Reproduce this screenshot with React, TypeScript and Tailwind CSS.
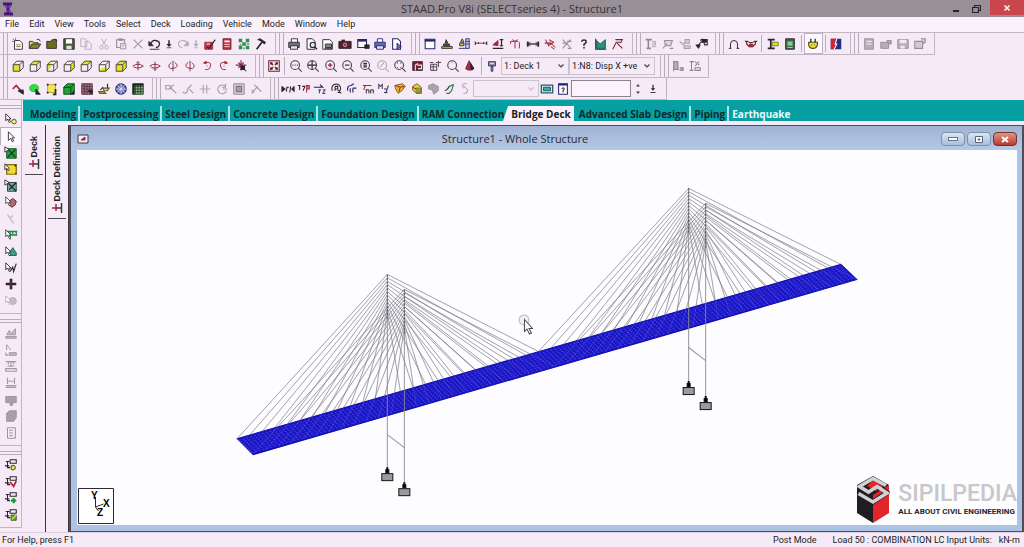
import { clsx } from 'clsx';

// [path, stroke, fill, stroke width]
type Shape = [string, string, string?, number?];

const K = '#2b2530';
const G = '#b3aab4';
const R = '#a5283a';
const Y = '#e9e02a';
const N = '#26266e';
const GR = '#1d9a35';
const X = 'none';

const cube = (face: string): Shape[] => [
  [face, X, Y],
  ['M2.5 6.5h7.500v7.500h-7.500zM2.5 6.500l4-4h7.500l-4 4M14 2.500v7.500l-4 4', '#4a4538', X, 1.1],
];
const FRONT = 'M2.5 6.500h7.500v7.500h-7.500z';
const TOP = 'M2.5 6.500l4-4h7.500l-4 4z';
const SIDE = 'M10 6.500l4-4v7.500l-4 4z';

const lens = (inner: string, color = K): Shape[] => [
  ['M2 7a5 5 0 1 0 10 0a5 5 0 1 0 -10 0M10.500 10.500l4 4', '#453d4a', X, 1.2],
  [inner, color, X, 1.3],
];
const cursor = (tone = K): Shape => ['M2 2v8l2-2l2 4l1.500-1l-2-3h2.500z', tone, '#fff', 1];
const sheet: Shape = ['M3.500 2h6l3 3v9h-9z', K, '#fff', 1.1];

const icons: Record<string, Shape[]> = {
  'New': [['M4 4h6l3 3v7h-9z', K, '#fff'], ['M6 9h5M6 11h5M2 2l3 3M5 1v3M1 5h3', '#77713b']],
  'Open': [['M1.500 13v-8h4l1 1.500h5v2', K, '#d9d26a'], ['M1.500 13l3-5h10l-3 5z', K, '#8c8426'], ['M10 3q3-2 4 2', K]],
  'Close': [['M2 13v-8h5l1-2h5v10z', K, '#716b1e'], ['M11 2l3 2', K]],
  'Save': [['M2 2h12v12h-12z', K, '#4b5b38'], ['M4.500 2.500h7v5h-7z', X, '#fff'], ['M5 10h6v4h-6z', X, '#dce0e8']],
  'Copy': [['M2 2h5l2 2v7h-7zM7 5h4l3 3v6h-7z', G]],
  'Cut': [['M5 2l5 8M11 2l-5 8M3 12a2 2 0 1 0 4 0a2 2 0 1 0 -4 0M9 12a2 2 0 1 0 4 0a2 2 0 1 0 -4 0', G]],
  'Paste': [['M3 3h9v4M3 3v9h4M6 2h3v2h-3z', '#999099', X, 1.4], ['M7.500 7.500h6v6h-6zM9 10h3', '#999099', '#ece4ee']],
  'Delete': [['M3 3l10 10M13 3l-10 10', '#a39aa4', X, 1.4]],
  'Undo': [['M3 8q2-5 6-4q5 1 4 5q-1 3-4 3', K, X, 1.5], ['M1 5v5h5z', K, K], ['M2 14h11', K]],
  'Undo list': [['M5 3v5', K, X, 2], ['M1.500 8h7l-3.500 4z', X, K], ['M2 13h6', K]],
  'Redo': [['M13 8q-2-5-6-4q-5 1-4 5q1 3 4 3', G, X, 1.3], ['M14 5v5h-5z', G, G]],
  'Redo list': [['M5 3v5', G, X, 2], ['M1.500 8h7l-3.500 4z', X, G], ['M2 13h6', G]],
  'Input Editor': [['M2 6h9v8h-9z', R, '#b8394a'], ['M4 11l3 2l7-10', K, X, 1.3], ['M4 8h4', '#fff']],
  'Calculator': [['M3.500 2h9v12h-9z', '#701525', '#c4384a'], ['M5 4h6v2h-6z', X, '#fff'], ['M5 8.500h6M5 11h6', '#f8d0d4', X, 1]],
  'Configure': [['M2 2h4v4h-4zM10 2h4v4h-4zM6 6h4v4h-4zM2 10h4v4h-4zM10 10h4v4h-4z', X, '#2a8f51'], ['M3 9h2M11 8h3M8 12v2', '#174d2b']],
  'Tools': [['M4 3l3-1l6 4l-1 2l-4-3', K, K], ['M9 6l-6 8', K, X, 2]],
  'Print': [['M5 6v-4h7v4', K, '#fff'], ['M2 6h12v6h-12z', K, '#777080'], ['M4 10h8v4h-8z', K, '#e8e4ee']],
  'Print Preview': [sheet, ['M7 9a3 3 0 1 0 6 0a3 3 0 1 0 -6 0M12 11l3 3', K, '#dfe8f0', 1.3]],
  'Report': [['M2 3h8l3 3v8h-11z', K, '#fff'], ['M5 8h7v4h-7zM4 13h9', K, '#888']],
  'Take Picture': [['M1 5h14v8h-14z', K, '#542029'], ['M6 9a2 2 0 1 0 4 0a2 2 0 1 0 -4 0', '#c9a8ae', R], ['M4 4h4', K, X, 2]],
  'Export View': [['M2 3h10v9h-10z', N, '#fff', 1.2], ['M2 4h10', N, X, 2.500], ['M10 9h5v4h-5z', K, K]],
  'Print Current View': [['M5 6v-4h6v4', N, '#fff'], ['M2 6h12v6h-12z', N, '#5f6bb2'], ['M4 10h8v4h-8z', N, '#d8dcf5']],
  'Page Setup': [['M3 2h6l3 3v9h-9z', N, '#fff', 1.2], ['M8 7l5 4l-5 3z', N, '#6c78bd']],
  'Structure Window': [['M2.500 2.500h11v11h-11z', N, '#fff', 1.2], ['M2 4h12', N, X, 2.500]],
  'Scale': [['M2 13h12v-2h-12z', K, '#d8c532'], ['M4 10h7v-2h-7zM6 7l1-4l2 4z', K, '#5a6432']],
  'Scale Results': [['M2 13h8M3 10h5v-3h-5zM4 6l2-4l2 4z', N, '#d8c532'], ['M10 2h4v11h-4z', N, '#d8d4e8'], ['M10 5h4M10 8h4', N]],
  'Dimension': [['M1 7h14', R, X, 1], ['M1.500 5v4M14.500 5v4M5 6v2M11 6v2', K, X, 1.2]],
  'Load Values': [['M2 13h12M10 3h4M12 3v7M10 10h4', K, X, 1.4], ['M2 9l6-5v6z', R, R]],
  'Support Reaction': [['M3 5h9M3 5v3M8 5v8M13 6v7M5 3l3 2l3-2', R, X, 1.1]],
  'Node Dimension': [['M1 8h14', K, X, 1.5], ['M2 5v6M14 5v6', K, X, 2], ['M5 6l-3 2l3 2M11 6l3 2l-3 2', K]],
  'Labels': [['M3 3l4 8M7 3l5 3l-6 4M10 8l4 4M2 7h7', R, '#efc6ae', 1.2], ['M9 11l4 3', K]],
  'Annotate': [['M3 3l9 9M12 3l-9 10M8 5h5M3 7h4M9 13h4', '#968c98', X, 1.2]],
  'Help': [['M5.500 5.500q0-2 2.500-2q2.500 0 2.500 2q0 1.500-2.500 3v1.500M8 11.500v1.500', K, X, 1.8]],
  'Results Graph': [['M2 2v12h12', K, X, 1.3], ['M3 4l4 4l6-5v10h-10z', '#155a50', '#2c8f7d']],
  'Animate': [['M2 14l4-8h6M7 7l6 6M5 3h8l-2 4', '#752838', X, 1.2]],
  'Steel Section': [['M2 3h7M5 3v10M3 13h5', '#918893', X, 1.8], ['M9 5h4v4h-4M9 11h5', '#aaa1ac', '#ddd3df']],
  'Assign Beam': [['M4 4h9l-2 6h-6zM2 13l5-5M10 13h4', '#968d98', '#ddd3df', 1.2]],
  'Assign Member': [['M8 3h5v4h-5zM2 5l4 4l3-3M7 10h7v3h-7z', '#aaa1ac', '#ddd3df', 1.2]],
  'Properties': [['M6 4q2-2 4-1h4v6h-3l-1-4q-4 0-6 5', '#39323e', X, 1.3], ['M1 9l5 0l-2 4zM8 3h5v3h-5z', K, K]],
  'Moving Load': [['M4 13v-5a4 4 0 0 1 8 0v5M2 13h3M11 13h3', K, X, 1.1]],
  'Influence Surface': [['M1 5h3q4 3 8 0h3M3 5v3l3 3h4l3-3v-3', '#5a2730', X, 1.3], ['M6 8h4v3h-4z', R, R]],
  'Section Wizard': [['M2 3h8M2 13h8M5.500 3v10', K, X, 2], ['M7 6h7v4h-7z', '#77721e', Y]],
  'Advanced': [['M3 2h10v12h-10z', K, '#46604d'], ['M5 5h6v5h-6z', X, '#6bd48a'], ['M5 12h6', '#9de']],
  'Connect': [['M3 6h10v3q-1 4-5 4q-4 0-5-4z', '#4a481a', Y, 1.2], ['M5.500 2v4M10.500 2v4', K, X, 1.5], ['M6 9h1M9.500 9h1', K]],
  'Bentley': [['M2 2h12v12h-12z', X, '#252c86'], ['M2 2h7l-2 5l2 1l-4 6h-3z', X, '#cf2635'], ['M9 2l-2 6h2l-3 6', '#fff', X, 1.2]],
  'Save Layout': [['M3 2h10v12h-10z', '#968d98', '#b7adb9'], ['M5 5h6M5 8h6', '#eee', X, 1.4]],
  'Load Layout': [['M2 6h9v7h-9zM9 4h5v4h-3z', '#968d98', '#b7adb9']],
  'Save View': [['M2 3h12v10h-12z', '#968d98', '#b7adb9'], ['M4 3h8v4h-8zM5 10h5v3h-5z', X, '#f2e8f4']],
  'Open View': [['M2 5h9v8h-9zM9 2h5v4l-3 2', '#968d98', '#d4cad6', 1.2]],

  'Front': cube(FRONT),
  'Back': cube(TOP),
  'Right': cube('M6.500 2.500l-4 4v7.500l4-4z'),
  'Left': cube(SIDE),
  'Top': cube(TOP),
  'Bottom': cube('M2.500 14l4-4h7.500l-4 4z'),
  'Isometric': cube(FRONT + TOP + SIDE),
  'Rotate Up': [['M2 8q6-4 12 0q-5 4-11 1M8 3v10', '#8f3042', X, 1.1], ['M6 5l2-2l2 2', R]],
  'Rotate Down': [['M2 8q6-4 12 0q-5 4-11 1M8 3v10', '#8f3042', X, 1.1], ['M6 11l2 2l2-2', R]],
  'Rotate Left': [['M8 2v12M6 4q-5 4-1 7l6-1M10 4q5 3 1 6', '#8f3042', X, 1.1]],
  'Rotate Right': [['M8 2v12M6 4q-5 3-1 6M10 4q5 4 1 7l-6-1', '#8f3042', X, 1.1]],
  'Spin Left': [['M7 4q6-1 5 4q-1 5-6 4M7.500 8h1', '#8f3042', X, 1.1], ['M7 2.500v3l-3-1z', R, R]],
  'Spin Right': [['M9 4q-6-1-5 4q1 5 6 4M7.500 8h1', '#8f3042', X, 1.1], ['M9 2.500v3l3-1z', R, R]],
  'Toggle 3D': [['M2 7h12M8 1v12M5 4l6 6M11 4l-6 6', '#8f3042', X, 1.3], ['M8 8h4v4h-4zM11 11l3 3', K, K, 1.2]],
  'Whole Structure': [['M2 2h12v12h-12z', '#6e2230', '#f8e4ea', 1.2], ['M4 4l3 3M12 4l-3 3M4 12l3-3M12 12l-3-3', '#4a2028', X, 1.2], ['M4 4h2v2h-2zM10 4h2v2h-2zM4 10h2v2h-2zM10 10h2v2h-2z', '#4a2028', '#4a2028', 0.6]],
  'Zoom Window': lens('M4 7h1M6.500 7h1M9 7h1'),
  'Zoom Factor': lens('M7 2v10M2 7h10'),
  'Zoom In': lens('M7 4.500v5M4.500 7h5', '#9c1830'),
  'Zoom Out': lens('M4.500 7h5'),
  'Zoom All': lens('M5 5h4M5 7h4M5 9h4'),
  'Zoom Previous': [['M2 7a5 5 0 1 0 10 0a5 5 0 1 0 -10 0M10.500 10.500l4 4M5 9l4-5', '#b1a8b3', X, 1.3]],
  'Zoom Extents': lens('M5 5v-1M9 5v-1M5 10v-1M9 10v-1'),
  'Display Window': [['M2 3h11v10h-11z', K, '#7b2030'], ['M5 13v-6l3-2M7 7h5v4h-4', '#efe2e8', X, 1.2]],
  'Pan': [['M3 6h7v7h-7zM6 6v7M3 9h7M12 2v7M9 4h6M2 4h4', '#57404a', X, 1.1]],
  'Magnify': lens('M5 5q2-2 4 0', '#d5cdd8'),
  'Rotate': [['M7 2l5 8q-4 5-9 1z', '#6d2030', '#a23247'], ['M8 4l5 7q-2 2-4 2z', X, '#2e2030']],
  'View Options': [['M4 3h8v5h-8zM7 8h2v6h-2z', '#3a3558', '#8d8ab0'], ['M6 5h4', '#fff']],
  'Assign Load': [['M3 2v12M3 3h5v9h-5M6 12h3M10 10h4v3h-4', '#8d838f', '#b5abb7', 1.1]],
  'View Load': [['M2 3h5M4 3v10M2 13h4M8 3l5 4M13 3l-5 5M8 10h6v3h-6z', '#8d838f', X, 1.2]],

  'Beam Page': [['M2 8l4-4l8 9', '#a7292f', X, 2], ['M8 10l6 4v-5z', K, K]],
  'Node Page': [['M2 7a5 4 0 1 0 10 0a5 4 0 1 0 -10 0', '#20b830', '#2fdc3d'], ['M9 8l5 6h-5z', K, K]],
  'Plate Page': [['M3 3h9v9h-9z', '#b5a41f', '#f7e35a'], ['M2 3h2M11 3h2M2 12h2M12 8v6h-3', K, X, 2]],
  'Solid Page': [['M2 6l4-4h8v8l-4 4h-8z', '#123f1b', '#1ba52f'], ['M2 6h8v8M10 6l4-4', '#0c3513'], ['M10 14l4-4v4z', K, K]],
  'Surface Page': [['M2 2h12v12h-12z', '#4c2a33', '#a77480'], ['M2 5h12M2 8h12M2 11h12M5 2v12M8 2v12M11 2v12', '#4c2a33', X, 0.8], ['M9 10l5 4v-5z', K, K]],
  'Physical Member': [['M2 11h6l2 2h-7zM7 7h7l-2 3h-4z', '#6b5c22', '#f0d64a', 1.2], ['M12 2v5M4 9l3-3', N, X, 1.3]],
  'Geometry': [['M2 8a6 6 0 1 0 12 0a6 6 0 1 0 -12 0', N, '#6a70ba', 1.2], ['M2 8h12M8 2v12M4 4l8 8M12 4l-8 8', '#e4e6ff', X, 0.9]],
  'Tables': [['M2 2h12v12h-12z', '#1e3f22', '#8fae8c'], ['M2 5h12M2 8h12M2 11h12M5 2v12M8 2v12M11 2v12', '#142616', X, 0.8], ['M2 3h12M3 2v12', '#142616', X, 2]],
  'Snap Node': [['M2 4h5v4h-5zM7 6l7 7M11 3l-5 5', '#a59ca7', X, 1.3]],
  'Add Beam': [['M2 11a2.500 2.500 0 1 0 5-2l5-6M8 6l6 7', '#a59ca7', X, 1.3]],
  'Insert Node': [['M2 8h12M6 3v10M10 3v10', '#b0a7b2', X, 1.3]],
  'Circular Repeat': [['M12 5a5 5 0 1 0 1 5M9 8h5M12 2v4h-4', '#a59ca7', X, 1.2]],
  'Mirror': [['M2 2h12v12h-12z', '#99909b', '#d3c9d5', 1.1], ['M5 5h6v6h-6z', '#7f7681', '#a79da9', 1.2]],
  'Renumber': [['M3 13l7-8M6 3l8 8M3 9l3 3', '#a59ca7', X, 1.4]],
  'Local Axis': [['M1 5l4 3l-4 3zM15 5l-3 3l3 3z', K, K, 1], ['M6 6h3M7 6l-1 5M11 5l-1 7', K, X, 1.2]],
  'Force Flag': [['M1 4h3M3 4v5M6 5h3l-2 5', K, X, 1.2], ['M11 4h3v4h-3M11 3v9', R, '#d5828f', 1.2]],
  'Axial': [['M1 6h10l-3-3', K, X, 1.3], ['M6 9h3M8 9l-1 4M11 9h3l-3 4h3', N, X, 1.1]],
  'Torsion': [['M4 10a5 5 0 1 1 6 2M7 5v5M7 5h3v3h-3M10 9l4 4', K, X, 1.2]],
  'Moment Y': [['M3 10q-1-6 4-6M7 4l3-2M6 7v5M9 7v5M9 7h4', N, X, 1.3]],
  'Moment Z': [['M2 4h10M5 4l-2 5', R, X, 1.2], ['M6 8v5M6 9h3v4M11 9v4M11 9h3v4', K, X, 1.1]],
  'Member Stress': [['M2 8v-5l2 2l2-2v5M8 8h4M8 12h4M13 4l-3 9', '#3d3a58', X, 1.2]],
  'Section Stress': [['M2 4l9-2l3 3l-4 5l-4 3l-3-5z', '#6c5b1b', '#e2ba31'], ['M3 4l5 2l5-1M8 6l-1 5', '#b3283b', X, 1.3]],
  'Plate Stress': [['M3 5l5-3l5 4v7h-6l-4-4z', '#51672d', '#f0c83a'], ['M7 7h5v5h-5z', '#9c7123', '#6fb74c'], ['M3 6l4 2', '#b3283b', X, 1.4]],
  'Solid Stress': [['M3 4l5-2l6 3v5l-5 4l-2-5l-4-1z', '#99909b', '#aaa1ac']],
  'Mode Shape': [['M3 10q4-1 5-5l5-2l-2 7l-3 3h-3', '#2f7d49', X, 1.3], ['M5 9l4-4', N]],
  'Dynamics': [['M10 2q-5-1-5 3q6 2 6 5q-1 4-5 3M5 7l3-2', G, X, 1.2]],
  'Play': [['M1.500 3.500h13v9h-13z', '#285b68', '#d6eef0', 1.5], ['M4 6h8v4h-8z', '#174e5a', '#39aaa4']],
  'Query': [['M3 2h10v12h-10z', N, '#fff', 1.2], ['M3 3h10', N, X, 2], ['M6.500 8q2-3 3 0l-1.500 2v2', K, X, 1.2]],
  'Step': [['M8 3v5', K, X, 1.4], ['M5.500 7h5l-2.500 3z', X, K], ['M5 12h6', K]],

  'Nodes Cursor': [cursor(), ['M9 11a2.500 2.500 0 1 0 5 0a2.500 2.500 0 1 0 -5 0', '#7d7620', '#fff6a0', 1.4]],
  'Beams Cursor': [['M5 2v10l2.500-2.500l2 4l1.500-1l-2-3.500h3z', K, '#fff', 1]],
  'Plates Cursor': [['M3 3h11v11h-11z', '#0e5a23', '#23a03c'], ['M4 3l9 10M13 4l-9 9', '#0c3b18', X, 1.4], ['M1 1v6l5-3z', K, '#fff']],
  'Surface Cursor': [['M3 3h11v11h-11z', '#7a6d1b', '#f2da27', 1.4], ['M1 2v7l2-2l2 3l1-1l-1-3z', K, '#fff'], ['M13 3v2M13 13h1', K, X, 2]],
  'Solids Cursor': [['M4 4h10v10h-10z', '#1a3b40', '#6bb095'], ['M4 4l10 10M14 4l-8 8', K, X, 1.6], ['M1 1v6l5-3z', K, '#fff']],
  'Geometry Cursor': [['M6 7l4-3l4 3l-1 4l-4 3l-4-3z', '#541e28', '#b26b76'], cursor('#4b414d')],
  'Text Cursor': [['M4 3l7 10M10 4l-3 3', '#c3b9c5', X, 1.4]],
  'Load Edit': [['M3 4h12M4 8h11M7 4v9M10 4v4M14 4v4', '#23864b', X, 1.5], cursor('#2b4a35')],
  'Support Edit': [['M10 3l4 6v3h-8v-3z', '#1c5a48', '#3f9d82'], cursor('#2b3a35')],
  'Release Edit': [['M7 12l3-5l1 5l3-9', K, X, 1.3], cursor()],
  'Joint Cursor': [['M8 2v12M2 8h12', K, X, 3], ['M8 4v8', R, X, 1]],
  'Filtered': [['M6 8a4 4 0 1 0 8 0a4 4 0 1 0 -8 0', G, '#c5bbc7'], cursor(G)],
  'Plate Load': [['M2 12h12v2h-12zM3 10l3-5l2 4l5-6v7z', '#a098a2', '#c2b9c4', 1.1]],
  'Floor Load': [['M6 11h8v3h-8zM3 2l5 6M3 2v6M2 11v3h3', '#a098a2', '#c2b9c4', 1.1]],
  'Joist Load': [['M2 3h12M5 3v3M8 3v6M11 3v3M4 8h8M2 11h12v3h-12z', '#a098a2', X, 1.3]],
  'Wind Load': [['M4 2v7M12 2v7M5 6h6M2 11h12M2 13h12', '#a098a2', X, 1.3]],
  'Mass': [['M2 4h12v7h-4v3h-3v-3h-5z', '#99909b', '#a89faa']],
  'Volume': [['M3 5l3-3h8v8l-3 4h-8z', '#99909b', '#a89faa']],
  'List': [['M4 2h9v12h-9zM6 5h4M6 8h4M6 11h4', '#99909b', X, 1.1]],
  'Group Query': [['M2 4h4M4 4v7h3M1 9h5M7 2h7v4h-7z', K, X, 1.2], ['M8 11a2.500 2.500 0 1 0 5 0a2.500 2.500 0 1 0 -5 0', '#6b661f', '#eee358', 1.3]],
  'Group Remove': [['M2 4h4M4 4v7h3M1 9h5M7 2h7v4h-7z', K, X, 1.2], ['M7 8l4 5l3-6', '#c01d38', X, 2]],
  'Group Add': [['M2 4h4M4 4v7h3M1 9h5M7 2h7v4h-7z', K, X, 1.2], ['M11 8v6M8 11h6', GR, X, 2.500]],
  'Group Edit': [['M2 4h4M4 4v7h3M1 9h5M7 2h7v4h-7z', K, X, 1.2], ['M8 8h6v6h-6z', '#3e5a23', '#4eb04a'], ['M9 13l5-5', Y, X, 1.4]],
};

function Drawing({ name, className = 'w-4 h-4' }: { name: string; className?: string }) {
  return (
    <svg viewBox="0 0 16 16" className={clsx('shrink-0', className)} aria-hidden="true">
      {icons[name].map(([d, stroke, fill = 'none', width = 1], i) => (
        <path key={i} d={d} stroke={stroke} fill={fill} strokeWidth={width} />
      ))}
    </svg>
  );
}

function Tools({ names }: { names: string[] }) {
  return (
    <>
      {names.map((name, i) => {
        if (name === '|') {
          return <span key={i} className="w-px mx-0.5 my-0.5 bg-[#b9aebb] shrink-0" />;
        }
        const narrow = name.endsWith(' list');
        return (
          <button
            key={i}
            type="button"
            aria-label={name}
            className={clsx(
              'flex items-center justify-center overflow-hidden',
              narrow ? 'w-2.5 shrink-0' : 'flex-1 min-w-0',
              name === 'Connect' && 'bg-[#fdf8fe] border border-[#c0b4c2]'
            )}
          >
            {narrow ? (
              <svg viewBox="0 0 10 16" className="w-2 h-3" aria-hidden="true">
                {icons[name].map(([d, stroke, fill = 'none', width = 1], j) => (
                  <path key={j} d={d} stroke={stroke} fill={fill} strokeWidth={width} />
                ))}
              </svg>
            ) : (
              <Drawing name={name} className="w-3.5 h-3.5" />
            )}
          </button>
        );
      })}
    </>
  );
}

function Group({ width, names, children }: { width: string; names: string[]; children?: React.ReactNode }) {
  return (
    <div className={clsx('flex shrink-0 pl-[3px] pr-[5px] border-r border-b border-[#c2b6c4]', width)}>
      <span className="w-[5px] mr-px border-x border-[#b9adbb] shrink-0" />
      <Tools names={names} />
      {children}
    </div>
  );
}

function Combo({ label, options, className }: { label: string; options: string[]; className?: string }) {
  return (
    <div className={clsx('relative flex my-0.5 shrink-0 border border-[#cbc0cd]', className)}>
      <select
        aria-label={label}
        className="appearance-none flex-1 min-w-0 py-0 pl-0.5 bg-transparent text-[9px] leading-4 font-['Roboto',sans-serif] outline-none"
      >
        {options.map((o) => (
          <option key={o}>{o}</option>
        ))}
      </select>
      <svg viewBox="0 0 6 4" className="absolute right-1 top-1.5 w-1.5 h-1 pointer-events-none" aria-hidden="true">
        <path d="M0.500 0.500L3 3L5.500 0.500" fill="none" stroke={options.length ? '#444' : '#c8bdca'} strokeWidth="1.200" />
      </svg>
    </div>
  );
}

const menus = ['File', 'Edit', 'View', 'Tools', 'Select', 'Deck', 'Loading', 'Vehicle', 'Mode', 'Window', 'Help'];

const tabs = [
  'Modeling', 'Postprocessing', 'Steel Design', 'Concrete Design', 'Foundation Design', 'RAM Connection',
  'Bridge Deck', 'Advanced Slab Design', 'Piping', 'Earthquake',
];

function Toolbars() {
  return (
    <div className="bg-[#f5eaf6] border-t border-[#c2b6c4]">
      <div className="flex h-[22px]">
        <Group
          width="w-[276px]"
          names={['New', 'Open', 'Close', 'Save', 'Copy', 'Cut', 'Paste', 'Delete', 'Undo', 'Undo list', 'Redo', 'Redo list', 'Input Editor', 'Calculator', 'Configure', 'Tools']}
        />
        <Group
          width="w-[136px]"
          names={['Print', 'Print Preview', 'Report', 'Take Picture', 'Export View', 'Print Current View', 'Page Setup']}
        />
        <Group
          width="w-[221px]"
          names={['Structure Window', 'Scale', 'Scale Results', 'Dimension', 'Load Values', 'Support Reaction', 'Node Dimension', 'Labels', 'Annotate', 'Help', 'Results Graph', 'Animate']}
        />
        <Group width="w-[83px]" names={['Steel Section', 'Assign Beam', 'Assign Member', 'Properties']} />
        <Group
          width="w-[135px]"
          names={['Moving Load', 'Influence Surface', '|', 'Section Wizard', 'Advanced', '|', 'Connect', '|', 'Bentley']}
        />
        <Group width="w-[84px]" names={['Save Layout', 'Load Layout', 'Save View', 'Open View']} />
      </div>
      <div className="flex h-[23px]">
        <Group
          width="w-[256px]"
          names={['Front', 'Back', 'Right', 'Left', 'Top', 'Bottom', 'Isometric', 'Rotate Up', 'Rotate Down', 'Rotate Left', 'Rotate Right', 'Spin Left', 'Spin Right', 'Toggle 3D']}
        />
        <Group
          width="w-[405px]"
          names={['Whole Structure', '|', 'Zoom Window', 'Zoom Factor', 'Zoom In', 'Zoom Out', 'Zoom All', 'Zoom Previous', 'Zoom Extents', 'Display Window', 'Pan', 'Magnify', 'Rotate', '|', 'View Options']}
        >
          <Combo label="Deck" options={['1: Deck 1']} className="w-[68px]" />
          <Combo label="Influence diagram" options={['1:N8: Disp X +ve']} className="w-[86px]" />
        </Group>
        <Group width="w-[48px]" names={['Assign Load', 'View Load']} />
      </div>
      <div className="flex h-[22px]">
        <Group
          width="w-[153px]"
          names={['Beam Page', 'Node Page', 'Plate Page', 'Solid Page', 'Surface Page', 'Physical Member', 'Geometry', 'Tables']}
        />
        <Group width="w-[118px]" names={['Snap Node', 'Add Beam', 'Insert Node', 'Circular Repeat', 'Mirror', 'Renumber']} />
        <Group
          width="w-[396px]"
          names={['Local Axis', 'Force Flag', 'Axial', 'Torsion', 'Moment Y', 'Moment Z', 'Member Stress', 'Section Stress', 'Plate Stress', 'Solid Stress', 'Mode Shape', 'Dynamics']}
        >
          <Combo label="Load case" options={[]} className="w-[66px]" />
          <Tools names={['Play', 'Query']} />
          <input aria-label="Step value" className="w-[60px] my-0.5 shrink-0 border border-[#8d838f] bg-[#fbf2fc] px-1 text-[9px]" />
          <button type="button" aria-label="Spin value" className="w-3.5 shrink-0 flex items-center justify-center">
            <svg viewBox="0 0 6 12" className="w-1.5 h-3" aria-hidden="true">
              <path d="M1 3.500h4l-2-2.500zM1 8.500h4l-2 2.500z" fill="#4b434d" />
            </svg>
          </button>
          <Tools names={['Step']} />
        </Group>
      </div>
    </div>
  );
}

function SideGroup({ height, names, pressed }: { height: string; names: string[]; pressed?: string }) {
  return (
    <div className="border-r border-b border-[#c2b6c4] pt-[5px] pb-1">
      <div className="h-1 mb-0.5 border-y border-[#b9adbb]" />
      <div className={clsx('flex flex-col', height)}>
        {names.map((name) => (
          <button
            key={name}
            type="button"
            aria-label={name}
            className={clsx('flex-1 min-h-0 flex items-center justify-center', name === pressed && 'bg-[#fdf8fe] border-l border-t border-[#b9adbb]')}
          >
            <Drawing name={name} className="w-3.5 h-3.5" />
          </button>
        ))}
      </div>
    </div>
  );
}

function PageTab({ label }: { label: string }) {
  return (
    <div className="w-[23px] shrink-0 flex flex-col border-r border-[#3a343c] pt-[11px]">
      <button type="button" className="flex flex-col items-center mx-0.5 pb-1 border-b border-[#4a434c]">
        <span className="[writing-mode:vertical-rl] rotate-180 text-[9px] leading-3 font-bold font-['Liberation_Sans',sans-serif]">
          {label}
        </span>
        <svg viewBox="0 0 12 12" className="w-3 h-3" aria-hidden="true">
          <path d="M10.500 1v10M5 6h5" stroke="#3a343c" strokeWidth="1.500" />
          <path d="M1 6h5M5 2v7" stroke="#a5283a" strokeWidth="1.500" />
        </svg>
      </button>
    </div>
  );
}

interface TowerProps {
  x: number;
  y: number;
  left: [number, number];
  right: [number, number];
}

const CABLES = 12;

function Cables({ x, y, left, right }: TowerProps) {
  const midX = (left[0] + right[0]) / 2;
  const midY = (left[1] + right[1]) / 2;
  const lines = [left, right].flatMap((end) =>
    Array.from({ length: CABLES }, (_, i) => {
      const t = 1 - i / CABLES;
      return `M${x} ${y + i * 3.4}L${midX + (end[0] - midX) * t} ${midY + (end[1] - midY) * t}`;
    })
  );
  return <path d={lines.join('')} fill="none" />;
}

const towers: TowerProps[] = [
  { x: 387, y: 274, left: [237, 438], right: [538, 351] },
  { x: 404, y: 289, left: [253, 453], right: [554, 366] },
  { x: 688, y: 188, left: [538, 351], right: [840, 264] },
  { x: 705, y: 203, left: [554, 366], right: [856, 279] },
];

function Bridge() {
  const strips = Array.from({ length: 8 }, (_, i) => {
    const t = (i + 1) / 9;
    return `M${237 + 16 * t} ${438 + 16 * t}L${840 + 16 * t} ${264 + 15 * t}`;
  });
  return (
    <svg viewBox="77 150 939 374" className="w-full h-full" role="img" aria-label="Whole structure">
      <g stroke="#565557" strokeWidth="0.55">
        {towers.map((t) => (
          <Cables key={t.x} {...t} />
        ))}
      </g>
      <path d="M237 438L840 264L856 279L253 454Z" fill="#1a16c8" stroke="#120cae" />
      <path d={strips.join('')} stroke="#9a98ee" strokeWidth="0.6" strokeDasharray="1.500 2.500" opacity="0.7" />
      <g stroke="#c8c6f5" strokeWidth="0.5" opacity="0.3">
        {towers.map((t) => (
          <Cables key={t.x} {...t} />
        ))}
      </g>
      <g>
        {towers.map((t) => (
          <g key={t.x}>
            <path d={`M${t.x} ${t.y}v197`} stroke="#8b898d" strokeWidth="0.9" />
            <path d={`M${t.x} ${t.y}v45`} stroke="#58565a" strokeDasharray="2 1.500" />
            <path d={`M${t.x - 1.5} ${t.y + 198}v-3h1v-2h1v2h1v3z`} stroke="#111" />
            <rect x={t.x - 5.5} y={t.y + 199} width="11" height="7" fill="#9c9a9e" stroke="#151515" />
          </g>
        ))}
      </g>
      <path d="M387 434L404 447M688 347L705 360" stroke="#98949c" />
      <circle cx="523.500" cy="319.500" r="5" fill="#f1eff2" stroke="#bab6bc" />
      <path d="M524 319v12l2.500-2.500l2.500 5l2-1l-2.500-4.500h3.500z" fill="#fff" stroke="#4c4850" />
    </svg>
  );
}

function Watermark() {
  return (
    <div className="absolute right-0 bottom-0 flex items-center gap-2">
      <svg viewBox="0 0 34 50" className="w-[34px] h-[50px] shrink-0" aria-hidden="true">
        <path d="M17 1L33 10L17 30L1 10Z" fill="#211c20" />
        <path d="M1 10L17 20V48L1 38Z" fill="#211c20" />
        <path d="M33 10L17 20V48L33 38Z" fill="#e0252b" />
        <path d="M17 5L27 11L20 16L11 11Z" fill="#e0252b" />
        <path d="M30 10.500L17 3.500L3.500 11.500L12.500 17L21 11.500L26 14.500" fill="none" stroke="#d2d0d2" strokeWidth="3.600" />
        <path d="M26 14.500L31 17.500L17 27L3.500 18.500" fill="none" stroke="#211c20" strokeWidth="5" />
        <path d="M24 13.500L31 18L17 27L2.500 18.500" fill="none" stroke="#d2d0d2" strokeWidth="3.600" />
      </svg>
      <div className="font-['Roboto',sans-serif] whitespace-nowrap">
        <p className="text-[23px] leading-6 font-medium text-[#c8c7c9]">SIPILPEDIA</p>
        <p className="text-[8px] leading-3 font-bold text-[#2a262b]">ALL ABOUT CIVIL ENGINEERING</p>
      </div>
    </div>
  );
}

function ChildWindow() {
  return (
    <div className="flex-1 min-w-0 flex flex-col bg-[#adc3e3] border-l-2 border-t border-r-2 border-b border-[#4f4b57] pl-1.5 pr-[5px] pb-1.5">
      <div className="h-6 pt-0.5 -ml-1.5 -mr-[5px] pl-1.5 pr-[5px] shrink-0 flex items-center bg-gradient-to-b from-[#9fb3d3] to-[#b5c8e6]">
        <svg viewBox="0 0 12 10" className="w-3 h-2.5 shrink-0" aria-hidden="true">
          <path d="M1 1h10v8h-10z" fill="#f3eef4" stroke="#3d3842" />
          <path d="M4 6l4-3v3z" fill="#a5283a" stroke="#a5283a" />
        </svg>
        <h2 className="flex-1 text-center text-[11px] leading-4 text-[#2a2a34]">Structure1 - Whole Structure</h2>
        <div className="flex gap-0.5">
          <button type="button" aria-label="Minimize window" className="w-6 h-3.5 rounded-sm border border-[#7c90b0] bg-gradient-to-b from-[#dbe5f3] to-[#a9bddc] flex items-center justify-center">
            <span className="w-2.5 h-1 border border-[#66748c] bg-white" />
          </button>
          <button type="button" aria-label="Restore window" className="w-6 h-3.5 rounded-sm border border-[#7c90b0] bg-gradient-to-b from-[#dbe5f3] to-[#a9bddc] flex items-center justify-center">
            <svg viewBox="0 0 8 7" className="w-2 h-[7px]" aria-hidden="true">
              <path d="M0.500 0.500h7v6h-7zM3 3h2v1h-2z" fill="#fff" stroke="#56637a" />
            </svg>
          </button>
          <button type="button" aria-label="Close window" className="w-6 h-3.5 rounded-sm border border-[#7a2f2c] bg-gradient-to-b from-[#dd9489] to-[#b9382b] flex items-center justify-center">
            <svg viewBox="0 0 8 7" className="w-2 h-[7px]" aria-hidden="true">
              <path d="M1 1l6 5M7 1l-6 5" stroke="#fff" strokeWidth="2" />
            </svg>
          </button>
        </div>
      </div>
      <div className="relative flex-1 min-h-0 bg-[#fdfcfe]">
        <Bridge />
        <svg viewBox="0 0 36 36" className="absolute left-px bottom-px w-9 h-9 text-[10px] font-bold font-['Liberation_Sans',sans-serif]" aria-label="Axes">
          <path d="M0.500 0.500h35v35h-35z" fill="#fff" stroke="#2c2830" />
          <path d="M17.500 9v10l8-3M17.500 19l3 4" fill="none" stroke="#2c2830" />
          <text x="13" y="11">Y</text>
          <text x="25" y="19">X</text>
          <text x="19" y="28">Z</text>
        </svg>
        <Watermark />
      </div>
    </div>
  );
}

export default function App() {
  return (
    <div className="h-screen flex flex-col overflow-hidden bg-[#f5eaf6] text-[#221d24] font-['Open_Sans','Noto_Sans',sans-serif]">
      {/* Title bar */}
      <header className="h-[17px] shrink-0 flex items-center bg-[#989096]">
        <svg viewBox="0 0 12 14" className="w-3 h-3.5 ml-0.5 shrink-0" aria-hidden="true">
          <path d="M1 2h9M2 12h9M6 2v10" stroke="#4a1478" strokeWidth="3" />
          <path d="M3 5h6M4 9h5" stroke="#7d2fb5" strokeWidth="1.500" />
        </svg>
        <h1 className="flex-1 text-center text-[11px] leading-4 pl-16 text-[#37313a]">STAAD.Pro V8i (SELECTseries 4) - Structure1</h1>
        <button type="button" aria-label="Minimize" className="w-5 h-full flex items-center justify-center">
          <span className="w-1.5 h-0.5 mt-1 bg-[#2a242c]" />
        </button>
        <button type="button" aria-label="Restore" className="w-5 h-full flex items-center justify-center">
          <svg viewBox="0 0 9 8" className="w-[9px] h-2" aria-hidden="true">
            <path d="M2.500 2v-1.500h6v5h-2M0.500 2.500h6v5h-6z" fill="none" stroke="#2a242c" strokeWidth="1.200" />
          </svg>
        </button>
        <button type="button" aria-label="Close" className="w-[34px] h-[15px] ml-1 self-start bg-[#c9474c] flex items-center justify-center">
          <svg viewBox="0 0 6 6" className="w-1.5 h-1.5" aria-hidden="true">
            <path d="M0.500 0.500l5 5M5.500 0.500l-5 5" stroke="#fff" strokeWidth="1.500" />
          </svg>
        </button>
      </header>

      <nav className="h-[15px] shrink-0 flex items-center bg-[#fbf1fd] text-[9px] leading-none font-['Roboto',sans-serif]">
        {menus.map((m) => (
          <button key={m} type="button" className="px-[5px]">
            {m}
          </button>
        ))}
      </nav>

      <Toolbars />

      <div className="flex-1 min-h-0 flex">
        <aside className="w-[22px] shrink-0">
          <SideGroup
            height="h-[198px]"
            pressed="Beams Cursor"
            names={['Nodes Cursor', 'Beams Cursor', 'Plates Cursor', 'Surface Cursor', 'Solids Cursor', 'Geometry Cursor', 'Text Cursor', 'Load Edit', 'Support Edit', 'Release Edit', 'Joint Cursor', 'Filtered']}
          />
          <SideGroup
            height="h-[116px]"
            names={['Plate Load', 'Floor Load', 'Joist Load', 'Wind Load', 'Mass', 'Volume', 'List']}
          />
          <SideGroup height="h-[66px]" names={['Group Query', 'Group Remove', 'Group Add', 'Group Edit']} />
        </aside>

        <main className="flex-1 min-w-0 flex flex-col pl-px">
          <div className="h-[21px] shrink-0 flex items-end bg-[#06a0a2] pl-1 text-[10px] font-bold">
            {tabs.map((tab) => (
              <button
                key={tab}
                type="button"
                className={clsx(
                  'relative h-[15px] pl-[3px] leading-4 whitespace-nowrap',
                  tab === 'Bridge Deck' ? 'bg-[#fbf1fd] ml-0.5 mr-0.5 pr-[3px]' : 'text-[#0b2b2e] pr-0.5',
                  tab === 'Earthquake' && 'text-[#e6fbfb]',
                  !['Bridge Deck', 'RAM Connection', 'Earthquake'].includes(tab) && 'border-r-2 border-[#a9e4e4]'
                )}
              >
                {tab === 'Bridge Deck' && (
                  <svg viewBox="0 0 5 15" className="absolute right-full top-0 w-[5px] h-[15px]" aria-hidden="true">
                    <path d="M5 0V15H0Z" fill="#fbf1fd" />
                  </svg>
                )}
                {tab}
              </button>
            ))}
          </div>
          <div className="flex-1 min-h-0 flex pt-1">
            <PageTab label="Deck" />
            <PageTab label="Deck Definition" />
            <ChildWindow />
          </div>
        </main>
      </div>

      <footer className="h-[15px] shrink-0 flex items-center gap-4 pl-0.5 pr-1 text-[9px] leading-none border-t border-[#ded2e0] font-['Roboto',sans-serif]">
        <span className="flex-1">For Help, press F1</span>
        <span>Post Mode</span>
        <span>Load 50 : COMBINATION LC Input Units:&nbsp;&nbsp; kN-m</span>
      </footer>
    </div>
  );
}
